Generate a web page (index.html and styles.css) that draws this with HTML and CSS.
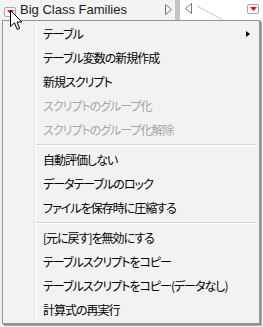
FILE: index.html
```html
<!DOCTYPE html>
<html lang="ja">
<head>
  <meta charset="UTF-8" />
  <meta name="viewport" content="width=device-width, initial-scale=1.0"/>
  <title>Big Class Families</title>
  <link rel="stylesheet" href="styles.css">
</head>
<body>
  <!-- Table header strip -->
  <div class="titlebar">
    <div class="table-name">
      <span class="hotspot">
        <svg width="7" height="4" viewBox="0 0 7 4"><polygon points="0,0 7,0 3.5,4" fill="#e0141e"/></svg>
      </span>
      <span class="name">Big Class Families</span>
      <svg class="arrow-right" width="7" height="11" viewBox="0 0 7 11"><polygon points="0.5,0.5 6.5,5.5 0.5,10.5" fill="none" stroke="#777" stroke-width="1"/></svg>
    </div>
    <div class="splitter"></div>
    <div class="columns-area">
      <svg class="arrow-left" width="7" height="11" viewBox="0 0 7 11"><polygon points="6.5,0.5 0.5,5.5 6.5,10.5" fill="none" stroke="#777" stroke-width="1"/></svg>
      <svg class="diag" width="28" height="16" viewBox="0 0 28 16"><line x1="0" y1="2" x2="26" y2="16" stroke="#c8c8c8" stroke-width="1"/></svg>
      <span class="hotspot hotspot-right">
        <svg width="7" height="4" viewBox="0 0 7 4"><polygon points="0,0 7,0 3.5,4" fill="#e0141e"/></svg>
      </span>
    </div>
  </div>

  <!-- Popup menu -->
  <ul class="menu">
    <li class="item has-sub">テーブル</li>
    <li class="item">テーブル変数の新規作成</li>
    <li class="item">新規スクリプト</li>
    <li class="item disabled">スクリプトのグループ化</li>
    <li class="item disabled">スクリプトのグループ化解除</li>
    <li class="sep"></li>
    <li class="item">自動評価しない</li>
    <li class="item">データテーブルのロック</li>
    <li class="item">ファイルを保存時に圧縮する</li>
    <li class="sep"></li>
    <li class="item">[元に戻す]を無効にする</li>
    <li class="item">テーブルスクリプトをコピー</li>
    <li class="item">テーブルスクリプトをコピー(データなし)</li>
    <li class="item">計算式の再実行</li>
  </ul>

  <!-- Mouse pointer -->
  <svg class="cursor" width="13" height="21" viewBox="0 0 13 21">
    <path d="M0.5,0.5 L0.5,16.5 L4.5,12.8 L7.2,19.5 L9.6,18.5 L7,12 L12,12 Z" fill="#fff" stroke="#000" stroke-width="1" stroke-linejoin="miter"/>
  </svg>
</body>
</html>
```

FILE: styles.css
```css
:root {
  --menu-bg: #f2f2f2;
  --menu-border: #979797;
  --text: #000;
  --text-disabled: #a6a6a6;
  --sep: #d7d7d7;
}

body {
  margin: 0;
  padding: 0;
  background: #f0f0f0;
  font-family: "Noto Sans CJK JP", "Noto Sans", sans-serif;
  position: relative;
  width: 263px;
  height: 327px;
  overflow: hidden;
}

.titlebar {
  display: flex;
  height: 20px;
}

.table-name {
  width: 175px;
  display: flex;
  align-items: center;
  background: #f3f3f3;
}

.hotspot {
  width: 10px;
  height: 8px;
  border: 1px solid #a8a8a8;
  border-radius: 2px;
  background: #f8f8f8;
  display: flex;
  align-items: center;
  justify-content: center;
  margin-left: 4px;
  margin-top: 4px;
}

.name {
  font-family: "Liberation Sans", Arial, sans-serif;
  font-size: 13px;
  color: #1a1a1a;
  margin-left: 4px;
  margin-top: -1px;
}

.arrow-right {
  margin-left: auto;
  margin-right: 3px;
  margin-top: -2px;
}

.splitter {
  width: 5px;
  background: #c4c4c4;
}

.columns-area {
  flex: 1;
  display: flex;
  align-items: flex-start;
  background: #fff;
  position: relative;
}

.arrow-left {
  margin-left: 5px;
  margin-top: 3px;
}

.diag {
  margin-left: 5px;
  margin-top: 4px;
}

.hotspot-right {
  margin-left: auto;
  margin-right: 4px;
  margin-top: 4px;
}

.menu {
  list-style: none;
  margin: 0 0 0 2px;
  padding: 1px 0;
  width: 256px;
  border: 1px solid var(--menu-border);
  box-shadow: 1px 1px 0 #8c8c8c, 2px 2px 0 #b0b0b0;
  background:
    linear-gradient(to right, transparent 31px, #e3e3e3 31px, #e3e3e3 32px, #fff 32px, #fff 33px, transparent 33px),
    var(--menu-bg);
}

.item {
  height: 24px;
  line-height: 24px;
  padding-left: 40px;
  font-size: 12px;
  font-feature-settings: "palt";
  letter-spacing: -1px;
  color: var(--text);
  position: relative;
  white-space: nowrap;
}

.item.disabled {
  color: var(--text-disabled);
}

.item.has-sub::after {
  content: "";
  position: absolute;
  right: 9px;
  top: 9px;
  border-left: 4px solid #000;
  border-top: 3.5px solid transparent;
  border-bottom: 3.5px solid transparent;
}

.sep {
  height: 6px;
  margin-left: 33px;
  margin-right: 2px;
  background: linear-gradient(to bottom, transparent 2px, var(--sep) 2px, var(--sep) 3px, #fff 3px, #fff 4px, transparent 4px);
}

.cursor {
  position: absolute;
  left: 10px;
  top: 10px;
}
```
